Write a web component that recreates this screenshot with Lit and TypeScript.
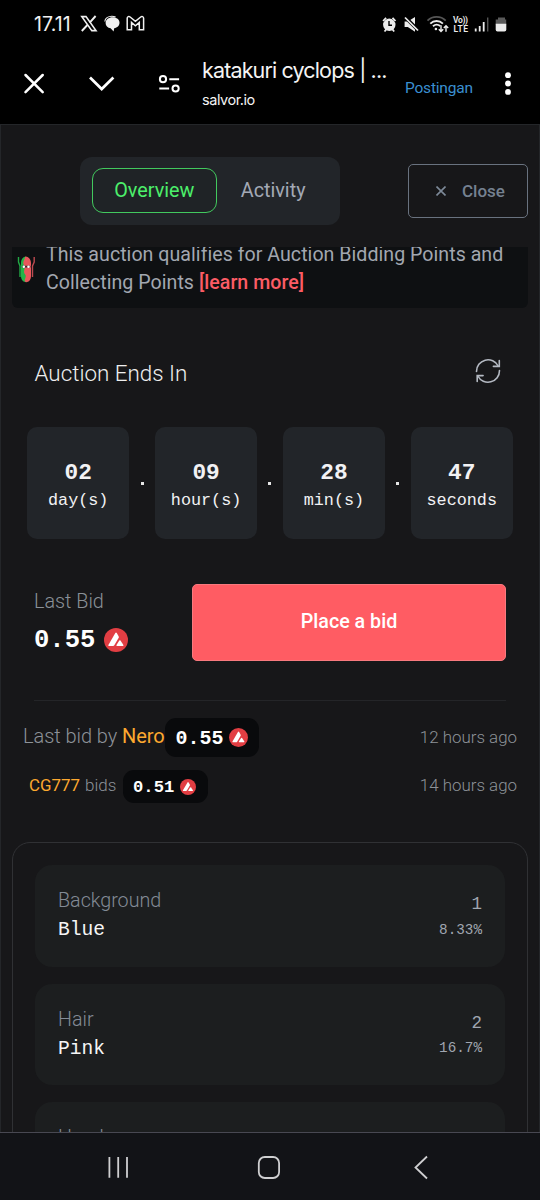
import { LitElement, html, css } from "lit";
import { customElement, property } from "lit/decorators.js";

@customElement("avax-coin")
class AvaxCoin extends LitElement {
  static styles = css`
    :host { display: block; flex: none; }
    svg { display: block; width: 100%; height: 100%; }
  `;
  render() {
    return html`<svg viewBox="0 0 24 24">
      <circle cx="12" cy="12" r="12" fill="#e23e43" />
      <path d="M11.3 5.1 Q12 4 12.8 5.1 L14.7 8.4 Q15 9.1 14.7 9.8 L10.3 17.3 Q9.8 18 9 18 L5 18 Q3.9 18 4.4 17 Z" fill="#fff" />
      <path d="M15.3 12.6 Q15.9 11.8 16.5 12.6 L19.4 17 Q19.8 18 18.8 18 L13 18 Q12 18 12.5 17 Z" fill="#fff" />
    </svg>`;
  }
}

@customElement("status-bar")
class StatusBar extends LitElement {
  static styles = css`
    :host { display: flex; height: 46px; padding: 1px 32px 0 34px; align-items: center; box-sizing: border-box; color: #f0f0f0; }
    .time { font: 400 19.5px/24px Inter, sans-serif; letter-spacing: 0.1px; width: 46px; white-space: nowrap; }
    .left { width: 68px; height: 20px; }
    .right { width: 128px; height: 24px; margin-left: auto; }
    svg { display: block; }
    .volte { font: 600 8.5px Roboto, sans-serif; }
  `;
  render() {
    return html`
      <span class="time">17.11</span>
      <svg class="left" viewBox="80 14 68 20" fill="none" stroke="#f0f0f0">
        <path d="M81.8 16.6h4.2l10 14h-4.2z" stroke-width="1.6" />
        <path d="M95.6 16l-5.9 6.6M87.4 25l-5.6 6" stroke-width="1.9" />
        <path d="M112.7 17.2c4 0 6.800 2.300 6.800 5.500 0 3-2.300 5-5.300 5.500l-.6 3.300-3-3.200c-3-.4-5-2.600-5-5.300 0-3.500 3-5.800 7.100-5.800z" fill="#f0f0f0" stroke="none" />
        <path d="M104.800 21.500c.3-3.200 3.300-5.300 7-5.300 1.500 0 2.800.3 3.800.8" stroke-width="1.100" />
        <path d="M127.200 18.300c0-1.700 1.700-2.300 2.900-1.300l5.300 4.400 5.300-4.400c1.200-1 2.900-.4 2.900 1.300v11.500h-4.300v-7.400l-3.900 3.300-3.900-3.300v7.400h-4.300z" stroke-width="1.500" />
      </svg>
      <svg class="right" viewBox="380 11 128 24" fill="none" stroke="#ececec">
        <circle cx="389.300" cy="23.800" r="6.200" fill="#ececec" stroke="none" />
        <path d="M389 20v4.200h3" stroke="#000" stroke-width="1.400" />
        <path d="M383.100 20l3-3.200M392.500 16.800l3 3.200M384.500 30.500l1.700-2M394.200 30.500l-1.700-2" stroke-width="1.800" />
        <path d="M404.600 20.600h3.200l7.200-4.600v14.800l-7.200-4.700h-3.200z" fill="#ececec" stroke="none" />
        <path d="M404.500 15.600l14 14" stroke="#000" stroke-width="3.500" />
        <path d="M405 16.500l13 13" stroke-width="1.700" />
        <path d="M427.500 19.600c5-4.900 13.200-4.900 18.200 0" stroke="#555" stroke-width="1.800" />
        <path d="M430.300 22.600c3.600-3.400 9-3.400 12.600 0M433 25.300c2.200-2 5-2 7.200-.3" stroke-width="1.900" />
        <circle cx="435.900" cy="28" r="1.300" fill="#ececec" stroke="none" />
        <path d="M441 24.300v6M438.800 28.200l2.200 2.300 2.200-2.300M446 30.700v-6M443.800 27l2.200-2.300 2.200 2.300" stroke-width="1.400" />
        <g fill="#ececec" stroke="none" class="volte">
          <text x="453" y="22" textLength="15">Vo))</text>
          <text x="453.500" y="30.500" textLength="14.500">LTE</text>
        </g>
        <path d="M475.700 30.500v-3M479.700 30.500v-5.500M483.700 30.500v-9.500" stroke-width="1.800" />
        <path d="M487.700 30.500v-14" stroke="#555" stroke-width="1.400" />
        <path d="M498 16.600h7v1.800h1.200v5h-10.500v-5h2.300z" fill="#5a5a5a" stroke="none" />
        <path d="M495.700 22.800h10.600v6q0 1.800-1.800 1.800h-7q-1.800 0-1.800-1.800z" fill="#ececec" stroke="none" />
      </svg>`;
  }
}

@customElement("browser-bar")
class BrowserBar extends LitElement {
  static styles = css`
    :host { display: flex; height: 78px; box-sizing: border-box; padding: 9px 28px 0 23px; align-items: flex-start; }
    .icons { width: 160px; height: 58px; flex: none; display: block; }
    .page { margin-left: 19px; width: 203px; font-family: Inter, sans-serif; color: #f4f4f4; white-space: nowrap; }
    .title { font-size: 21.500px; line-height: 31px; font-weight: 400; letter-spacing: -0.860px; }
    .host { font-size: 14.5px; line-height: 20px; margin-top: 4px; letter-spacing: -0.450px; }
    .tag { font: 400 15.500px/20px Roboto, sans-serif; color: #3a8fd0; margin-top: 23px; letter-spacing: -0.200px; }
    .more { width: 8px; height: 58px; margin-left: auto; }
  `;
  render() {
    return html`
      <svg class="icons" viewBox="23 55 160 58" fill="none" stroke="#fff">
        <path d="M25.500 75l17.200 17.200M42.700 75L25.500 92.200" stroke-width="2.500" stroke-linecap="round" />
        <path d="M90 77.500l11.700 11.500 11.700-11.500" stroke-width="2.700" />
        <circle cx="163" cy="79.200" r="3.100" stroke-width="2" />
        <circle cx="175.600" cy="88.500" r="3.100" stroke-width="2" />
        <path d="M169.300 79.200h9.800M159.300 88.500h9.800" stroke-width="2.100" />
      </svg>
      <div class="page">
        <div class="title">katakuri cyclops | ...</div>
        <div class="host">salvor.io</div>
      </div>
      <span class="tag">Postingan</span>
      <svg class="more" viewBox="504 55 8 58" fill="#fff">
        <circle cx="508" cy="75.200" r="2.900" /><circle cx="508" cy="83.500" r="2.900" /><circle cx="508" cy="91.900" r="2.900" />
      </svg>`;
  }
}

@customElement("trait-card")
class TraitCard extends LitElement {
  @property() name = "";
  @property() value = "";
  @property() count = "";
  @property() share = "";
  static styles = css`
    :host { display: flex; justify-content: space-between; box-sizing: border-box; height: 101.500px; border-radius: 17px; background: #1c1e1f; padding: 21px 23px 0; }
    .name { font: 300 19.700px/28px Roboto, sans-serif; color: #838b96; margin-top: 1px; }
    .value { font: 400 19.600px/28px "Liberation Mono", monospace; color: #f5f5f5; margin-top: 1px; }
    .side { text-align: right; font-family: "Liberation Mono", monospace; color: #a0a6b0; }
    .count { font-size: 17.500px; line-height: 26px; margin-top: 5px; }
    .share { font-size: 14.300px; line-height: 20px; margin-top: 2.500px; }
  `;
  render() {
    return html`
      <div><div class="name">${this.name}</div><div class="value">${this.value}</div></div>
      <div class="side"><div class="count">${this.count}</div><div class="share">${this.share}</div></div>`;
  }
}

@customElement("app-root")
class AppRoot extends LitElement {
  static styles = css`
    :host { display: flex; flex-direction: column; width: 540px; height: 1200px; background: #000; font-family: Roboto, sans-serif; overflow: hidden; }
    .content { height: 1008px; box-sizing: border-box; background: #171719; border: solid #242629; border-width: 1px 1px 0; overflow: hidden; padding: 32px 11px 0; }
    .tabs { display: flex; align-items: flex-start; height: 90px; }
    .group { display: flex; width: 260px; height: 68px; margin-left: 68px; box-sizing: border-box; padding: 11px 11px 11px 11.500px; border-radius: 12px; background: #222529; font-size: 19.800px; line-height: 44px; text-align: center; }
    .tab { width: 126px; height: 45px; box-sizing: border-box; border: 1px solid #42c95e; border-radius: 11px; background: #1f2326; color: #4cf06b; }
    .tab.idle { width: 112px; background: none; border-color: transparent; color: #a3a9b5; }
    .close { display: flex; align-items: center; width: 120px; height: 54px; margin: 7px 0 0 auto; box-sizing: border-box; border: 1px solid #69727f; border-radius: 5px; color: #758190; font-size: 17px; font-weight: 500; padding-left: 27px; }
    .close svg { width: 10px; height: 10px; margin-right: 16px; }
    .notice { display: flex; height: 61px; overflow: hidden; border-radius: 0 0 6px 6px; background: #0e1012; color: #a2a7b0; }
    .notice svg { width: 18px; height: 28px; margin: 8px 12px 0 5px; flex: none; }
    .notice p { margin: -6px 0 0 -1px; font-size: 19.600px; line-height: 27.500px; letter-spacing: 0.030px; white-space: nowrap; }
    .notice b { color: #fc5c65; font-weight: 500; }
    .heading { display: flex; justify-content: space-between; align-items: center; height: 30px; margin: 50px 27px 0 22.500px; color: #efefef; font-size: 22.400px; font-weight: 300; }
    .heading svg { width: 26px; height: 26px; margin-top: -5px; }
    .clock { display: grid; grid-template-columns: 1fr 25.400px 1fr 25.400px 1fr 25.400px 1fr; margin: 39px 15px 0; height: 112px; font-family: "Liberation Mono", monospace; color: #f2f2f4; text-align: center; }
    .unit { background: #222529; border-radius: 10px; padding-top: 31px; }
    .num { font-size: 22.800px; line-height: 30px; font-weight: 700; }
    .word { font-size: 16.800px; line-height: 26px; }
    .dot { width: 3px; height: 3px; background: #e6e6e6; margin: 54.500px auto 0; }
    .bid { display: flex; justify-content: space-between; margin: 45px 22px 0 22px; height: 117px; box-sizing: border-box; border-bottom: 1px solid #242528; }
    .label { font-size: 19.800px; font-weight: 300; line-height: 26px; margin-top: 5px; color: #8a9097; }
    .price { display: flex; align-items: center; gap: 9px; color: #fff; font: 700 25.600px/34px "Liberation Mono", monospace; margin-top: 7.500px; }
    .price avax-coin { width: 24px; height: 24px; }
    .price span, .pill span { transform: translateY(1px); }
    .place { width: 314px; height: 77px; border: 1px solid #f8797e; border-radius: 5px; background: #ff5c63; color: #fff; font: 500 19.700px/70px Roboto, sans-serif; padding: 0 0 2px; box-sizing: border-box; }
    .row { display: flex; align-items: center; height: 39px; margin: 17px 11px 0 11px; font-weight: 300; font-size: 20px; color: #8d9298; white-space: nowrap; }
    .who { width: 141.500px; margin-top: -3px; letter-spacing: -0.050px; }
    .row b { font-weight: 400; color: #fda92f; }
    .row time { margin: -2px 0 0 auto; font-size: 16.900px; }
    .pill { display: flex; align-items: center; justify-content: space-between; box-sizing: border-box; width: 94px; height: 39px; padding: 0 11px; border-radius: 11px; background: #090a0c; color: #fff; font: 700 20px "Liberation Mono", monospace; }
    .pill avax-coin { width: 19px; height: 19px; }
    .small { height: 33px; margin: 13px 11px 0 17px; font-size: 17px; }
    .small .who { width: 94px; letter-spacing: 0; margin-top: -4px; }
    .small time { margin-top: -4px; }
    .small b { font-size: 16.900px; margin-right: 5px; }
    .small .pill { width: 85px; height: 33px; padding: 0 12px 0 10px; font-size: 17.200px; }
    .small .pill avax-coin { width: 16px; height: 16px; }
    .traits { display: flex; flex-direction: column; gap: 17px; height: 400px; box-sizing: border-box; margin-top: 39px; padding: 22.200px 22px; border: 1px solid #303134; border-radius: 18px; }
    .traits trait-card { flex: none; }
    .nav { height: 68px; box-sizing: border-box; border-top: 1px solid #484852; background: #121317; }
    .nav svg { display: block; width: 540px; height: 67px; }
  `;
  private clock = [["02", "day(s)"], ["09", "hour(s)"], ["28", "min(s)"], ["47", "seconds"]];
  private traits = [["Background", "Blue", "1", "8.33%"], ["Hair", "Pink", "2", "16.7%"], ["Head", "", "", ""]];

  render() {
    return html`
      <status-bar></status-bar>
      <browser-bar></browser-bar>
      <main class="content">
        <div class="tabs">
          <div class="group"><div class="tab">Overview</div><div class="tab idle">Activity</div></div>
          <div class="close">
            <svg viewBox="0 0 10 10" stroke="#7d8998" stroke-width="1.600"><path d="M.5.5l9 9M9.500.5l-9 9" /></svg>Close
          </div>
        </div>
        <div class="notice">
          <svg viewBox="17 255 18 28">
            <path d="M26.300 256.500c-3.500 0-5.300 3-5.300 6.500v13c0 3.500 2 6.200 5.300 6.200z" fill="#22b548" />
            <path d="M25.300 256.500c3.500 0 5.700 3 5.700 6.500v13c0 3.500-2 6.200-5 6.200-3.500-2 1.500-5-1-8s1-6-1-9 1-6 1.300-8.700z" fill="#e9575c" />
            <path d="M18.500 257v5l1.500 4v11" stroke="#22a945" stroke-width="1.400" fill="none" />
            <path d="M34.200 257v5l-1.700 4v11" stroke="#bd4a50" stroke-width="1.400" fill="none" />
            <path d="M22 266.700h8.500" stroke="#3a2b30" stroke-width="1.800" />
            <circle cx="23.800" cy="266.700" r="1.300" fill="#fff" /><circle cx="28.500" cy="266.700" r="1.300" fill="#fff" />
          </svg>
          <p>This auction qualifies for Auction Bidding Points and<br />Collecting Points <b>[learn more]</b></p>
        </div>
        <div class="heading">Auction Ends In
          <svg viewBox="0 0 26 26" fill="none" stroke="#b4b9c2" stroke-width="1.600" stroke-linecap="round">
            <path d="M1.500 13.500A11.500 11.500 0 0 1 23.200 8M24.500 12.500A11.500 11.500 0 0 1 2.800 18" />
            <path d="M24.300 2.500v5.900h-5.900M2.200 23.500v-5.900h5.900" />
          </svg>
        </div>
        <div class="clock">
          ${this.clock.map(([n, w], i) => html`${i ? html`<div class="dot"></div>` : ""}
            <div class="unit"><div class="num">${n}</div><div class="word">${w}</div></div>`)}
        </div>
        <div class="bid">
          <div><div class="label">Last Bid</div><div class="price"><span>0.55</span><avax-coin></avax-coin></div></div>
          <button class="place">Place a bid</button>
        </div>
        <div class="row"><div class="who">Last bid by <b>Nero</b></div><div class="pill"><span>0.55</span><avax-coin></avax-coin></div><time>12 hours ago</time></div>
        <div class="row small"><div class="who"><b>CG777</b>bids</div><div class="pill"><span>0.51</span><avax-coin></avax-coin></div><time>14 hours ago</time></div>
        <div class="traits">
          ${this.traits.map(([n, v, c, s]) => html`<trait-card .name=${n} .value=${v} .count=${c} .share=${s}></trait-card>`)}
        </div>
      </main>
      <nav class="nav">
        <svg viewBox="0 1133 540 67" fill="none" stroke="#cfcfd1" stroke-width="1.800">
          <path d="M109.400 1157v20.800M118.200 1157v20.800M127 1157v20.800" />
          <rect x="258.800" y="1157" width="20.300" height="21" rx="6" />
          <path d="M427 1156.500l-11.500 11 11.500 11" />
        </svg>
      </nav>`;
  }
}
